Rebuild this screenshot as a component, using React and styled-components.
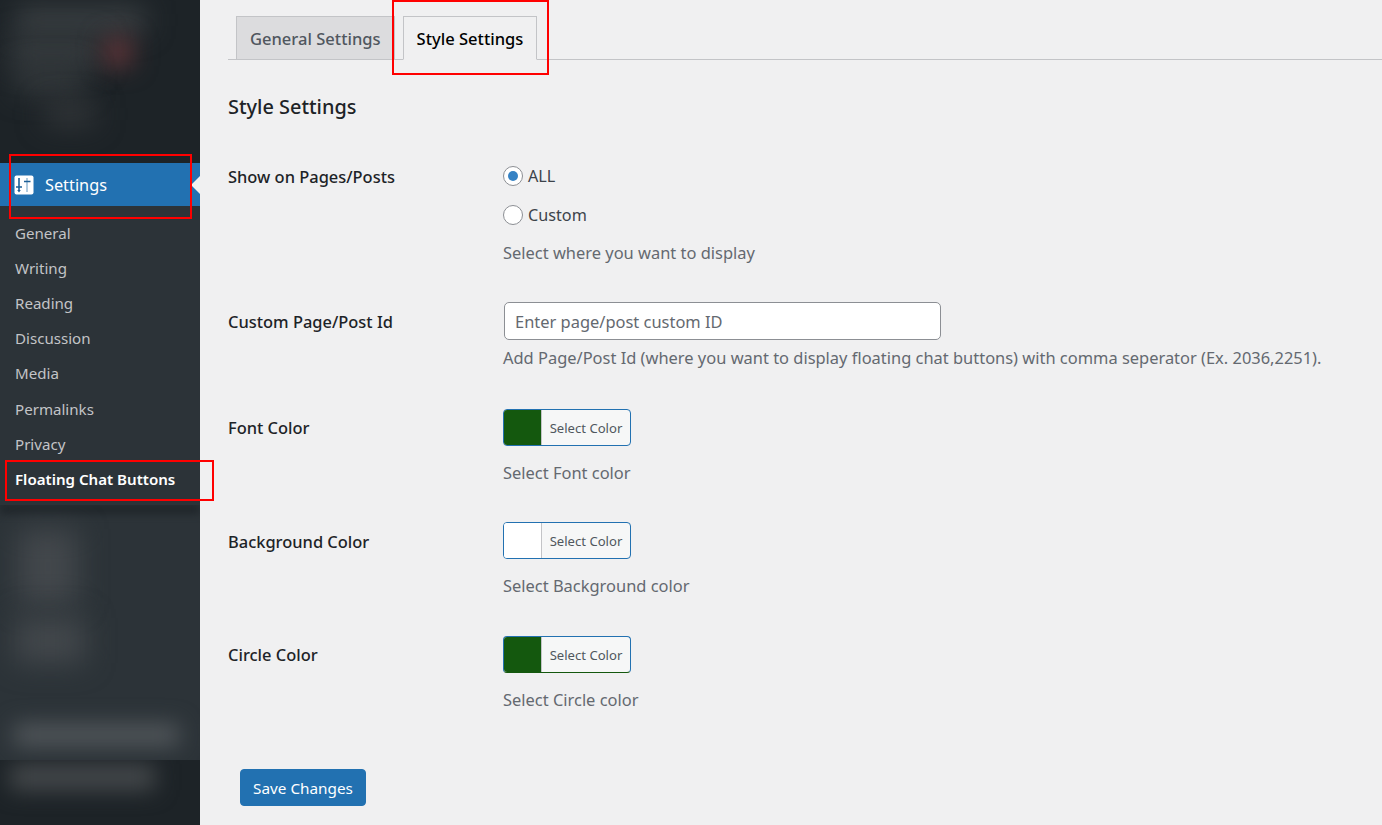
import React from 'react'
import styled, { createGlobalStyle } from 'styled-components'

const Global = createGlobalStyle`
  * { box-sizing: border-box; }
  html, body { margin: 0; height: 100%; }
  body {
    background: #f0f0f1;
    color: #3c434a;
    font-family: "Noto Sans", "Open Sans", sans-serif;
    font-size: 16.46px;
  }
`
const Page = styled.div`
  display: flex;
  width: 1382px;
  height: 825px;
  overflow: hidden;
  position: relative;
`
const Sidebar = styled.aside`
  width: 200px;
  flex: none;
  display: flex;
  flex-direction: column;
  background: #1d2327;
`
const BlurZone = styled.div`
  height: ${({ $h }) => $h}px;
  flex: none;
  overflow: hidden;
  padding: ${({ $pad }) => $pad || '0'};
  background: ${({ $bg }) => $bg || '#1d2327'};
  display: flex;
  flex-direction: column;
`
const SmudgeRow = styled.div`
  display: flex;
  margin-top: ${({ $top }) => $top || 0}px;
`
const Smudge = styled.div`
  width: ${({ $w }) => $w}px;
  height: ${({ $h }) => $h}px;
  margin-left: ${({ $left }) => $left || 0}px;
  margin-top: ${({ $top }) => $top || 0}px;
  background: ${({ $c }) => $c};
  filter: blur(${({ $blur }) => $blur || 14}px);
  flex: none;
`
const ActiveItem = styled.div`
  height: 43px;
  flex: none;
  background: #2271b1;
  color: #fff;
  display: flex;
  align-items: center;
  gap: 11px;
  padding-left: 14px;
  font-size: 16.3px;
  position: relative;
  &::after {
    content: '';
    position: absolute;
    right: 0;
    top: 13px;
    border: 9px solid transparent;
    border-left: 0;
    border-right-color: #f0f0f1;
  }
`
const SubMenu = styled.nav`
  height: 299px;
  flex: none;
  background: #2c3338;
  padding-top: 9px;
  display: flex;
  flex-direction: column;
`
const SubItem = styled.div`
  height: 35.2px;
  display: flex;
  align-items: center;
  padding-left: 15px;
  font-size: 15.1px;
  color: ${({ $active }) => ($active ? '#fff' : '#c3c4c7')};
  font-weight: ${({ $active }) => ($active ? 600 : 400)};
`
const Main = styled.main`
  flex: 1;
  padding: 16px 0 0 28px;
  display: flex;
  flex-direction: column;
`
const Tabs = styled.div`
  display: flex;
  gap: 8px;
  height: 44px;
  padding-left: 8px;
  border-bottom: 1px solid #c3c4c7;
`
const Tab = styled.div`
  height: ${({ $active }) => ($active ? 44 : 43)}px;
  padding: 0 13px;
  display: flex;
  align-items: center;
  border: 1px solid #c3c4c7;
  border-bottom: ${({ $active }) => ($active ? '1px solid #f0f0f1' : '0')};
  background: ${({ $active }) => ($active ? '#f0f0f1' : '#dcdcde')};
  color: ${({ $active }) => ($active ? '#000' : '#50575e')};
  font-size: 16.55px;
  font-weight: 500;
`
const Heading = styled.h2`
  margin: 33px 0 0;
  font-size: 19.9px;
  line-height: 28px;
  font-weight: 500;
  color: #1d2327;
`
const Row = styled.div`
  display: grid;
  grid-template-columns: 275px 1fr;
  margin-top: ${({ $top }) => $top}px;
`
const Label = styled.div`
  font-weight: 500;
  color: #1d2327;
  line-height: 24px;
  padding-top: ${({ $pad }) => $pad || 0}px;
`
const Field = styled.div`
  display: flex;
  flex-direction: column;
  align-items: flex-start;
`
const RadioLine = styled.label`
  display: flex;
  align-items: center;
  gap: 5px;
  height: 24px;
  font-size: 16.2px;
  margin-bottom: ${({ $gap }) => $gap || 0}px;
`
const Radio = styled.span`
  width: 20px;
  height: 20px;
  border-radius: 50%;
  border: 1px solid #8c8f94;
  background: #fff;
  display: flex;
  align-items: center;
  justify-content: center;
  &::before {
    content: '';
    width: 10px;
    height: 10px;
    border-radius: 50%;
    background: ${({ $on }) => ($on ? '#3582c4' : 'transparent')};
  }
`
const Desc = styled.p`
  margin: ${({ $top }) => $top || 0}px 0 0;
  line-height: 24px;
  color: #646970;
`
const TextInput = styled.input`
  width: 437px;
  height: 38px;
  margin-left: 1px;
  padding: 0 10px;
  border: 1px solid #8c8f94;
  border-radius: 5px;
  background: #fff;
  font: inherit;
  &::placeholder { color: #646970; opacity: 1; }
`
const ColorButton = styled.button`
  width: 128px;
  height: 37px;
  padding: 0;
  display: flex;
  border: 1px solid #2271b1;
  border-radius: 4px;
  background: #f6f7f7;
  overflow: hidden;
  font: inherit;
  ${({ $green }) => $green && 'border-bottom-color: #14580e;'}
`
const Swatch = styled.span`
  width: 38px;
  height: 100%;
  flex: none;
  background: ${({ $c }) => $c};
  border-right: 1px solid #c3c4c7;
`
const ColorText = styled.span`
  flex: 1;
  align-self: center;
  text-align: center;
  font-size: 13.1px;
  color: #50575e;
`
const SaveButton = styled.button`
  width: 126px;
  height: 37px;
  margin: 57px 0 0 12px;
  border: 1px solid #2271b1;
  border-radius: 4px;
  background: #2271b1;
  color: #fff;
  font: inherit;
  font-size: 15.3px;
`
const Callout = styled.div`
  position: absolute;
  left: ${({ $x }) => $x}px;
  top: ${({ $y }) => $y}px;
  width: ${({ $w }) => $w}px;
  height: ${({ $h }) => $h}px;
  border: 2.5px solid #f00;
  pointer-events: none;
`

const SettingsIcon = () => (
  <svg width="20" height="20" viewBox="0 0 20 20">
    <rect x="0.5" y="0.5" width="19" height="19" rx="2" fill="#fff" />
    <path d="M13 3v14" fill="none" stroke="#a9c6dc" strokeWidth="1.8" />
    <path d="M5 3v13M2 12h6M10 6.5h6.5" fill="none" stroke="#1d5f96" strokeWidth="1.6" />
    <path d="M5 17.5l-1.8-2.5h3.6z" fill="#1d5f96" />
  </svg>
)

const subItems = ['General', 'Writing', 'Reading', 'Discussion', 'Media', 'Permalinks', 'Privacy']

const colorRows = [
  { label: 'Font Color', desc: 'Select Font color', color: '#14580e', top: 39, pad: 7 },
  { label: 'Background Color', desc: 'Select Background color', color: '#fff', top: 37, pad: 8 },
  { label: 'Circle Color', desc: 'Select Circle color', color: '#14580e', top: 38, pad: 7, green: true },
]

export default function App() {
  return (
    <Page>
      <Global />
      <Sidebar>
        <BlurZone $h={163}>
          <Smudge $w={130} $h={20} $left={15} $top={10} $c="#44494c" />
          <SmudgeRow $top={8}>
            <Smudge $w={90} $h={28} $left={10} $c="#3a3f42" />
            <Smudge $w={28} $h={28} $left={4} $c="#63363a" $blur={12} />
          </SmudgeRow>
          <Smudge $w={70} $h={24} $left={15} $top={2} $c="#363b3e" />
          <Smudge $w={50} $h={20} $left={45} $top={12} $c="#36393c" />
        </BlurZone>
        <ActiveItem>
          <SettingsIcon />
          Settings
        </ActiveItem>
        <SubMenu>
          {subItems.map((s) => <SubItem key={s}>{s}</SubItem>)}
          <SubItem $active>Floating Chat Buttons</SubItem>
        </SubMenu>
        <BlurZone $h={255} $bg="#2c3338">
          <Smudge $w={200} $h={8} $c="#1d2327" $blur={4} />
          <Smudge $w={60} $h={75} $left={18} $top={16} $c="#42474b" />
          <Smudge $w={70} $h={45} $left={15} $top={14} $c="#42474b" />
          <Smudge $w={165} $h={22} $left={14} $top={61} $c="#53585c" $blur={11} />
        </BlurZone>
        <BlurZone $h={65}>
          <Smudge $w={145} $h={26} $left={10} $top={4} $c="#45494c" $blur={11} />
        </BlurZone>
      </Sidebar>
      <Main>
        <Tabs>
          <Tab>General Settings</Tab>
          <Tab $active>Style Settings</Tab>
        </Tabs>
        <Heading>Style Settings</Heading>
        <Row $top={43}>
          <Label $pad={1}>Show on Pages/Posts</Label>
          <Field>
            <RadioLine $gap={15}><Radio $on />ALL</RadioLine>
            <RadioLine><Radio />Custom</RadioLine>
            <Desc $top={14}>Select where you want to display</Desc>
          </Field>
        </Row>
        <Row $top={37}>
          <Label $pad={8}>Custom Page/Post Id</Label>
          <Field>
            <TextInput placeholder="Enter page/post custom ID" />
            <Desc $top={6}>Add Page/Post Id (where you want to display floating chat buttons) with comma seperator (Ex. 2036,2251).</Desc>
          </Field>
        </Row>
        {colorRows.map((r) => (
          <Row $top={r.top} key={r.label}>
            <Label $pad={r.pad}>{r.label}</Label>
            <Field>
              <ColorButton $green={r.green}>
                <Swatch $c={r.color} />
                <ColorText>Select Color</ColorText>
              </ColorButton>
              <Desc $top={15}>{r.desc}</Desc>
            </Field>
          </Row>
        ))}
        <SaveButton>Save Changes</SaveButton>
      </Main>
      <Callout $x={9} $y={154} $w={183} $h={65} />
      <Callout $x={392} $y={0} $w={157} $h={75} />
      <Callout $x={5} $y={460} $w={209} $h={41} />
    </Page>
  )
}
